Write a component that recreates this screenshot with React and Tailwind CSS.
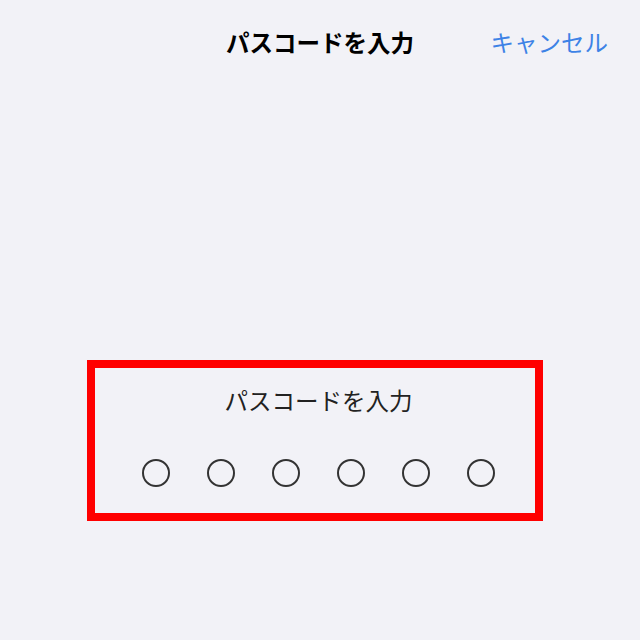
export default function App() {
  const dots = [0, 1, 2, 3, 4, 5];

  return (
    <div
      className="w-[640px] h-[640px] bg-[#f2f2f7] text-[#1c1c1e] flex flex-col"
      style={{ fontFamily: '"Noto Sans CJK JP", "Noto Sans", sans-serif' }}
    >
      <div className="h-[84px] grid grid-cols-[1fr_auto_1fr] items-center">
        <div />
        <div className="text-[23.5px] font-bold leading-[32px] text-black">パスコードを入力</div>
        <div className="flex justify-end pr-[32px]">
          <button className="text-[23.5px] leading-[32px] text-[#3d82e6]">キャンセル</button>
        </div>
      </div>

      <div className="mt-[276px] ml-[87px] w-[456px] h-[161px] border-8 border-[#ff0000] flex flex-col items-center pl-[7px]">
        <div className="pt-[16px] text-[23.5px] leading-[32px] text-[#222]">パスコードを入力</div>
        <div className="mt-[43px] flex gap-[37px]">
          {dots.map((d) => (
            <div key={d} className="w-[28px] h-[28px] rounded-full border-2 border-[#333]" />
          ))}
        </div>
      </div>
    </div>
  );
}
